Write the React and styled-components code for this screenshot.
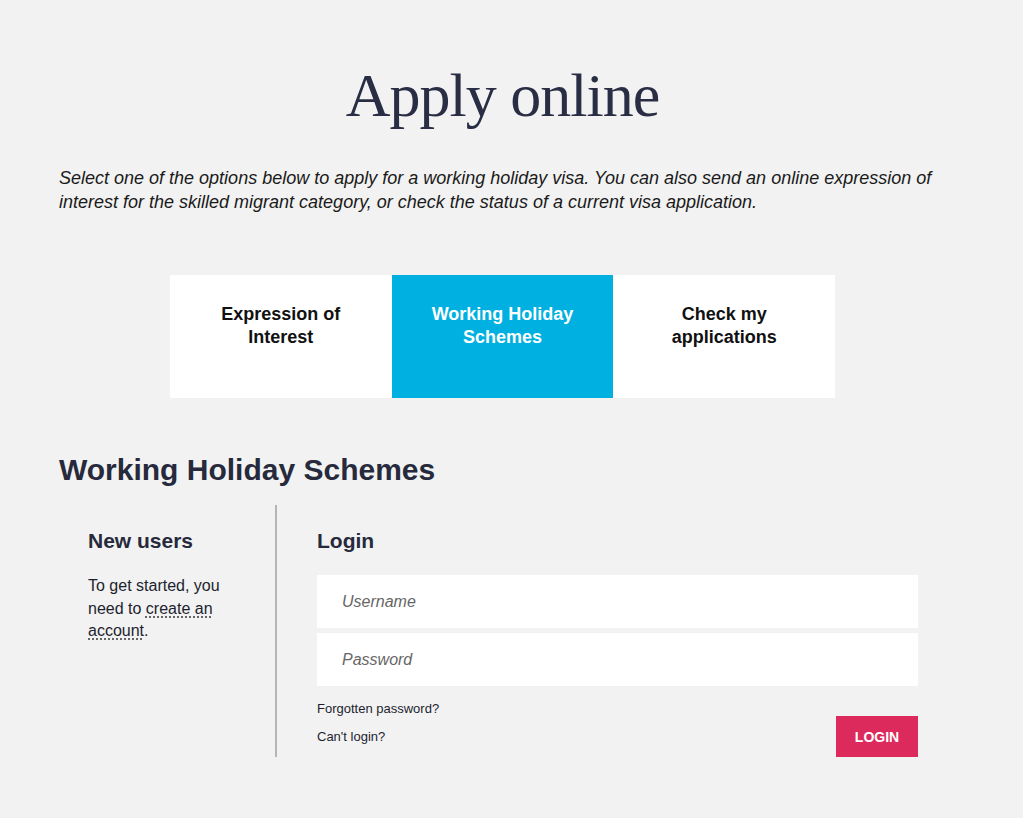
import React from "react";
import styled, { createGlobalStyle } from "styled-components";

const GlobalStyle = createGlobalStyle`
  body {
    margin: 0;
    background: #f2f2f2;
    font-family: "Liberation Sans", Arial, sans-serif;
    color: #1c1f2e;
  }
`;

const Page = styled.div`
  width: 1023px;
  padding: 58px 0 60px;
  box-sizing: border-box;
`;

const Title = styled.h1`
  margin: 0;
  width: 1005px;
  text-align: center;
  font-family: "Liberation Serif", "Times New Roman", serif;
  font-weight: 400;
  font-size: 62px;
  line-height: 74px;
  letter-spacing: -1px;
  color: #2a2e44;
`;

const Intro = styled.p`
  margin: 34px 0 0 59px;
  width: 895px;
  font-style: italic;
  font-size: 18px;
  line-height: 24px;
  color: #1a1a1a;
`;

const Tabs = styled.div`
  display: grid;
  grid-template-columns: repeat(3, 1fr);
  width: 665px;
  height: 123px;
  margin: 61px 0 0 170px;
  background: #fff;
`;

const Tab = styled.div`
  padding: 28px 30px 0;
  text-align: center;
  font-weight: 700;
  font-size: 18px;
  line-height: 23px;
  color: ${(p) => (p.$active ? "#fff" : "#111")};
  background: ${(p) => (p.$active ? "#00b0e1" : "transparent")};
`;

const Section = styled.section`
  margin: 55px 0 0 59px;
  width: 859px;
`;

const Heading = styled.h2`
  margin: 0;
  font-size: 30px;
  line-height: 34px;
  font-weight: 700;
  color: #262a3c;
`;

const Columns = styled.div`
  display: flex;
  margin-top: 18px;
`;

const Side = styled.div`
  width: 218px;
  padding: 23px 30px 0 29px;
  box-sizing: border-box;
  border-right: 2px solid #b5b5b5;
`;

const Main = styled.div`
  flex: 1;
  padding: 23px 0 0 40px;
`;

const SubHeading = styled.h3`
  margin: 0 0 21px;
  font-size: 21px;
  line-height: 26px;
  font-weight: 700;
  color: #262a3c;
`;

const Text = styled.p`
  margin: 0;
  font-size: 16px;
  line-height: 22.5px;
  color: #1c1f2e;
`;

const DottedLink = styled.a`
  color: inherit;
  text-decoration: underline dotted #444;
  text-underline-offset: 3px;
`;

const Fields = styled.div`
  display: flex;
  flex-direction: column;
  gap: 5px;
`;

const Input = styled.input`
  height: 53px;
  border: none;
  outline: none;
  background: #fff;
  padding: 0 25px;
  font-family: "Liberation Sans", Arial, sans-serif;
  font-size: 16px;
  color: #222;
  &::placeholder {
    font-style: italic;
    color: #666;
  }
`;

const Footer = styled.div`
  display: flex;
  justify-content: space-between;
  align-items: flex-end;
  margin-top: 15px;
`;

const Links = styled.div`
  display: flex;
  flex-direction: column;
  gap: 12px;
  padding-bottom: 12px;
`;

const SmallLink = styled.a`
  font-size: 13px;
  line-height: 16px;
  color: #1c1f2e;
  text-decoration: none;
`;

const LoginButton = styled.button`
  width: 82px;
  height: 41px;
  border: none;
  background: #dc2a5d;
  color: #fff;
  font-family: "Liberation Sans", Arial, sans-serif;
  font-weight: 700;
  font-size: 14px;
`;

function App() {
  return (
    <Page>
      <GlobalStyle />
      <Title>Apply online</Title>
      <Intro>
        Select one of the options below to apply for a working holiday visa. You can also send an online expression of
        interest for the skilled migrant category, or check the status of a current visa application.
      </Intro>

      <Tabs>
        <Tab>Expression of Interest</Tab>
        <Tab $active>Working Holiday Schemes</Tab>
        <Tab>Check my applications</Tab>
      </Tabs>

      <Section>
        <Heading>Working Holiday Schemes</Heading>
        <Columns>
          <Side>
            <SubHeading>New users</SubHeading>
            <Text>
              To get started, you need to <DottedLink href="#">create an account</DottedLink>.
            </Text>
          </Side>
          <Main>
            <SubHeading>Login</SubHeading>
            <Fields>
              <Input placeholder="Username" />
              <Input type="password" placeholder="Password" />
            </Fields>
            <Footer>
              <Links>
                <SmallLink href="#">Forgotten password?</SmallLink>
                <SmallLink href="#">Can't login?</SmallLink>
              </Links>
              <LoginButton>LOGIN</LoginButton>
            </Footer>
          </Main>
        </Columns>
      </Section>
    </Page>
  );
}

export default App;
